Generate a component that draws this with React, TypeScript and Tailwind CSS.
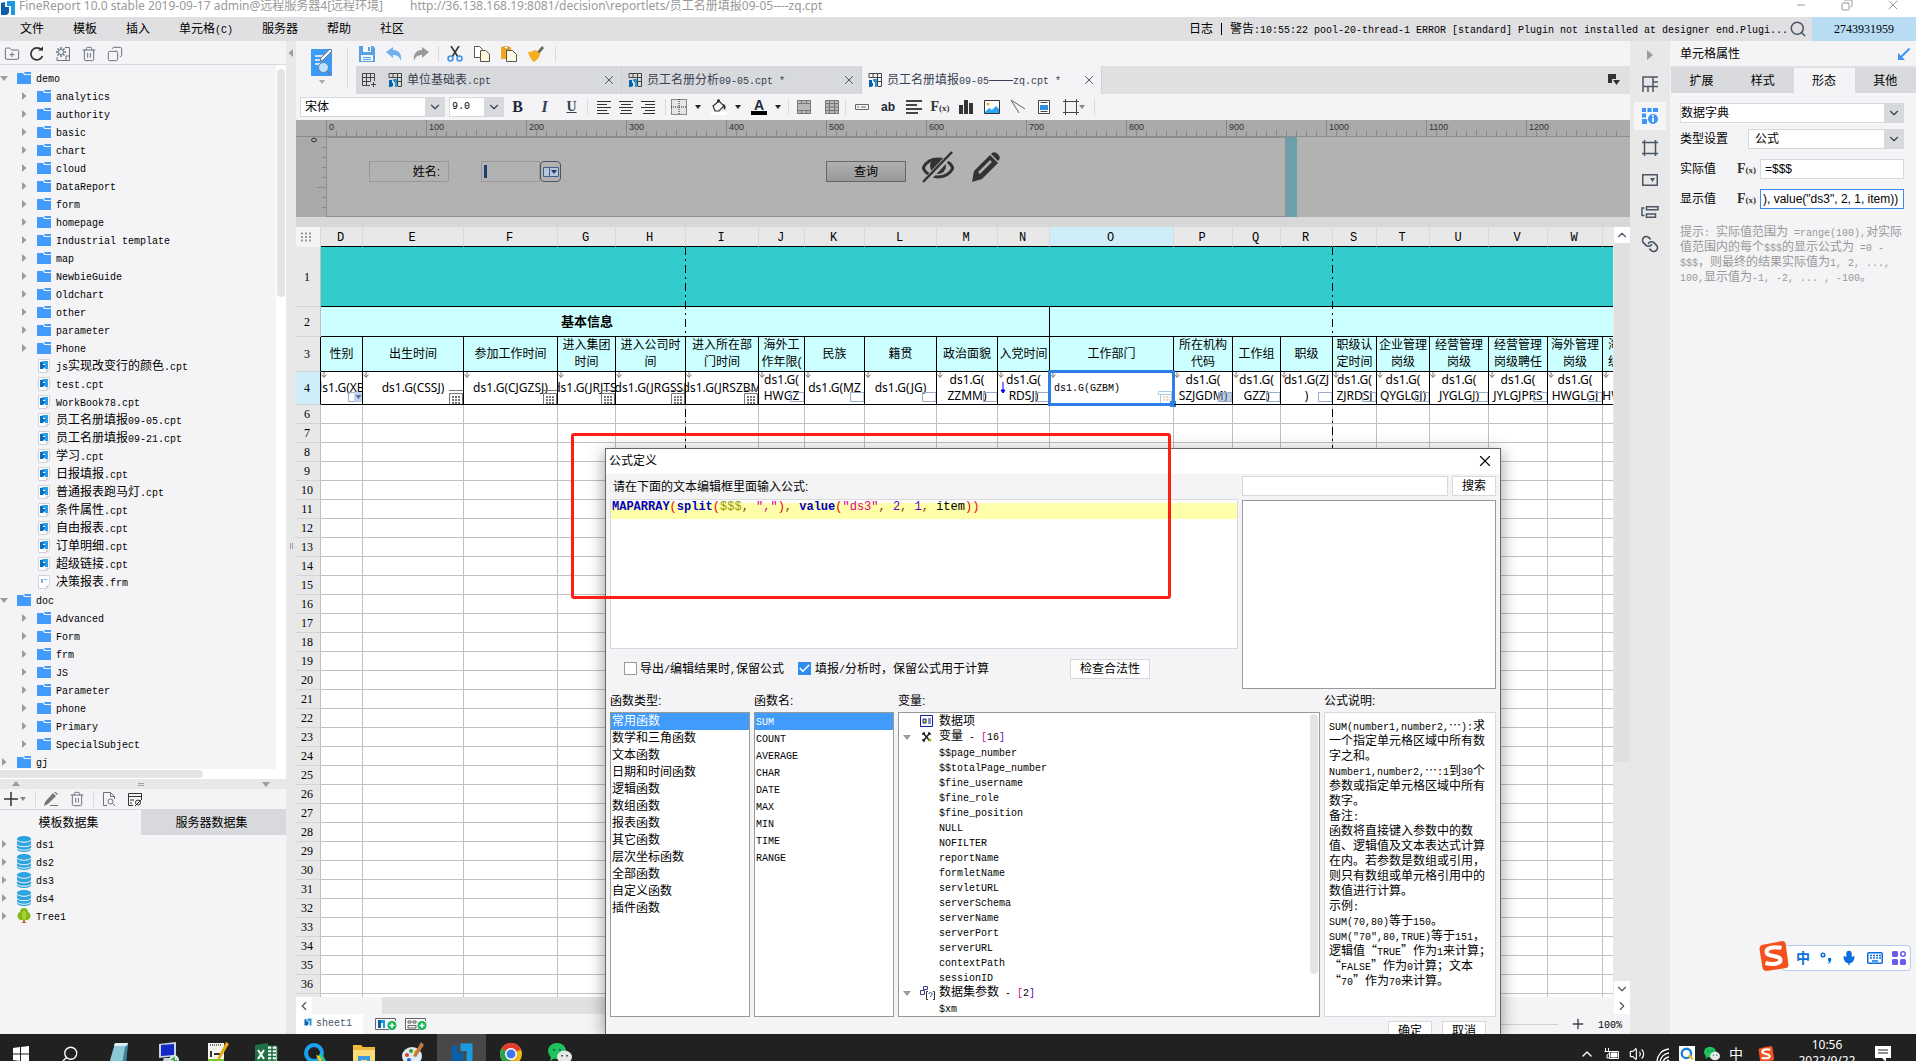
import { ReactNode } from "react";
import {
  Check,
  ChevronDown,
  ChevronLeft,
  ChevronRight,
  ChevronUp,
  Copy,
  FolderPlus,
  Link,
  Mic,
  Minus,
  Pencil,
  Plus,
  Search,
  Trash2,
  Volume2,
  X,
} from "lucide-react";

type TreeNode = { label: string; kind: "folder" | "cpt" | "frm"; level: 0 | 1; isOpen?: boolean };
type ColumnType = {
  id: string;
  width: number;
  title: string[];
  value: string[];
  widget: "combo" | "date" | "text" | "tree" | "none";
};

const folders = (names: string[]): TreeNode[] => names.map((label) => ({ label, kind: "folder", level: 1 }));

const templateTree: TreeNode[] = [
  { label: "demo", kind: "folder", level: 0, isOpen: true },
  ...folders([
    "analytics",
    "authority",
    "basic",
    "chart",
    "cloud",
    "DataReport",
    "form",
    "homepage",
    "Industrial template",
    "map",
    "NewbieGuide",
    "Oldchart",
    "other",
    "parameter",
    "Phone",
  ]),
  { label: "js实现改变行的颜色.cpt", kind: "cpt", level: 1 },
  { label: "test.cpt", kind: "cpt", level: 1 },
  { label: "WorkBook78.cpt", kind: "cpt", level: 1 },
  { label: "员工名册填报09-05.cpt", kind: "cpt", level: 1 },
  { label: "员工名册填报09-21.cpt", kind: "cpt", level: 1 },
  { label: "学习.cpt", kind: "cpt", level: 1 },
  { label: "日报填报.cpt", kind: "cpt", level: 1 },
  { label: "普通报表跑马灯.cpt", kind: "cpt", level: 1 },
  { label: "条件属性.cpt", kind: "cpt", level: 1 },
  { label: "自由报表.cpt", kind: "cpt", level: 1 },
  { label: "订单明细.cpt", kind: "cpt", level: 1 },
  { label: "超级链接.cpt", kind: "cpt", level: 1 },
  { label: "决策报表.frm", kind: "frm", level: 1 },
  { label: "doc", kind: "folder", level: 0, isOpen: true },
  ...folders(["Advanced", "Form", "frm", "JS", "Parameter", "phone", "Primary", "SpecialSubject"]),
  { label: "gj", kind: "folder", level: 0 },
];

const columns: ColumnType[] = [
  { id: "D", width: 42, title: ["性别"], value: ["ds1.G(XB)"], widget: "combo" },
  { id: "E", width: 101, title: ["出生时间"], value: ["ds1.G(CSSJ)"], widget: "date" },
  { id: "F", width: 94, title: ["参加工作时间"], value: ["ds1.G(CJGZSJ)"], widget: "date" },
  { id: "G", width: 58, title: ["进入集团", "时间"], value: ["ds1.G(JRJTSJ"], widget: "date" },
  { id: "H", width: 70, title: ["进入公司时", "间"], value: ["ds1.G(JRGSSJ"], widget: "date" },
  { id: "I", width: 73, title: ["进入所在部", "门时间"], value: ["ds1.G(JRSZBM"], widget: "date" },
  { id: "J", width: 46, title: ["海外工", "作年限("], value: ["ds1.G(", "HWGZ"], widget: "text" },
  { id: "K", width: 60, title: ["民族"], value: ["ds1.G(MZ"], widget: "text" },
  { id: "L", width: 72, title: ["籍贯"], value: ["ds1.G(JG)"], widget: "text" },
  { id: "M", width: 61, title: ["政治面貌"], value: ["ds1.G(", "ZZMM)"], widget: "text" },
  { id: "N", width: 52, title: ["入党时间"], value: ["ds1.G(", "RDSJ)"], widget: "text" },
  { id: "O", width: 124, title: ["工作部门"], value: ["ds1.G(GZBM)"], widget: "none" },
  { id: "P", width: 59, title: ["所在机构", "代码"], value: ["ds1.G(", "SZJGDM)"], widget: "tree" },
  { id: "Q", width: 48, title: ["工作组"], value: ["ds1.G(", "GZZ)"], widget: "text" },
  { id: "R", width: 52, title: ["职级"], value: ["ds1.G(ZJ", ")"], widget: "text" },
  { id: "S", width: 44, title: ["职级认", "定时间"], value: ["ds1.G(", "ZJRDSJ"], widget: "text" },
  { id: "T", width: 53, title: ["企业管理", "岗级"], value: ["ds1.G(", "QYGLGJ)"], widget: "text" },
  { id: "U", width: 59, title: ["经营管理", "岗级"], value: ["ds1.G(", "JYGLGJ)"], widget: "text" },
  { id: "V", width: 59, title: ["经营管理", "岗级聘任"], value: ["ds1.G(", "JYLGJPRS"], widget: "text" },
  { id: "W", width: 55, title: ["海外管理", "岗级"], value: ["ds1.G(", "HWGLGJ"], widget: "text" },
  { id: "X", width: 59, title: ["海外管理", "级别聘任"], value: ["ds1.G(", "HWGLJPRS"], widget: "text" },
];

const emptyRows = Array.from({ length: 32 }, (_, i) => i + 6);

const functionTypes = [
  "常用函数",
  "数学和三角函数",
  "文本函数",
  "日期和时间函数",
  "逻辑函数",
  "数组函数",
  "报表函数",
  "其它函数",
  "层次坐标函数",
  "全部函数",
  "自定义函数",
  "插件函数",
];
const functionNames = ["SUM", "COUNT", "AVERAGE", "CHAR", "DATE", "MAX", "MIN", "TIME", "RANGE"];
const variables = [
  "$$page_number",
  "$$totalPage_number",
  "$fine_username",
  "$fine_role",
  "$fine_position",
  "NULL",
  "NOFILTER",
  "reportName",
  "formletName",
  "servletURL",
  "serverSchema",
  "serverName",
  "serverPort",
  "serverURL",
  "contextPath",
  "sessionID",
];
const description = [
  "SUM(number1,number2,…):求",
  "一个指定单元格区域中所有数",
  "字之和。",
  "Number1,number2,…:1到30个",
  "参数或指定单元格区域中所有",
  "数字。",
  "备注:",
  "函数将直接键入参数中的数",
  "值、逻辑值及文本表达式计算",
  "在内。若参数是数组或引用，",
  "则只有数组或单元格引用中的",
  "数值进行计算。",
  "示例:",
  "SUM(70,80)等于150。",
  'SUM("70",80,TRUE)等于151，',
  "逻辑值“TRUE”作为1来计算；",
  "“FALSE”作为0计算；文本",
  "“70”作为70来计算。",
];
const hint = [
  "提示: 实际值范围为 =range(100),对实际",
  "值范围内的每个$$$的显示公式为 =0 -",
  "$$$，则最终的结果实际值为1, 2, ...,",
  "100,显示值为-1, -2, ... , -100。",
];

// Half-width characters take half of a full-width one, as in a Song face.
function Song({ children }: { children: string }) {
  return (
    <span className="whitespace-pre">
      {children.split(/([\x20-\x7e]+)/).map((part, i) =>
        i % 2 ? (
          <span key={i} className="font-['Liberation_Mono','Noto_Sans_CJK_SC',monospace] text-[10px]">
            {part}
          </span>
        ) : (
          part
        )
      )}
    </span>
  );
}

function FrMark({ className }: { className: string }) {
  return (
    <svg className={className} viewBox="0 0 16 16">
      <path d="M1 3l4-1v5h4v4a4 4 0 0 1-4 4H1z" fill="#0b5fa8" />
      <path d="M7 1h8v14h-4V6H7z" fill="#1d9be0" />
    </svg>
  );
}

function FolderIcon() {
  return (
    <svg className="h-3 w-3.5" viewBox="0 0 14 12">
      <path d="M0 1h6l1 2h7v9H0z" fill="#409bfa" />
      <path d="M7 0h7v2H8z" fill="#409bfa" />
    </svg>
  );
}

function FileIcon({ isForm }: { isForm?: boolean }) {
  return (
    <svg className="h-3.5 w-3.5" viewBox="0 0 14 14">
      <path d="M1.500.500h11v10l-3 3h-8z" fill="#fff" stroke="#cfd3d8" />
      {isForm ? (
        <path d="M4 4h2v4H4zM7 4h3v1H7z" fill="#7fb2e5" />
      ) : (
        <>
          <path d="M3 3l3-.5V6h2v2L6 10H3z" fill="#0b6fc0" />
          <path d="M6 2h5v8H8V5H6z" fill="#2a9fe5" />
        </>
      )}
      <path d="M9 13.500v-3h3.500z" fill="#cfd3d8" />
    </svg>
  );
}

function Triangle({ isOpen }: { isOpen?: boolean }) {
  return (
    <svg className="h-2 w-2" viewBox="0 0 8 8">
      <path d={isOpen ? "M0 2h8L4 7z" : "M2 0l4.500 4L2 8z"} fill="#9c9c9c" />
    </svg>
  );
}

function Caret({ color = "#222" }: { color?: string }) {
  return (
    <svg className="h-1 w-1.5" viewBox="0 0 6 4">
      <path d="M0 0h6L3 4z" fill={color} />
    </svg>
  );
}

function Divider({ className = "h-4" }: { className?: string }) {
  return <span className={`w-px shrink-0 bg-[#dadadc] ${className}`} />;
}

function IconButton({ label, className = "w-[27px]", children }: { label: string; className?: string; children: ReactNode }) {
  return (
    <button aria-label={label} className={`flex shrink-0 items-center justify-center ${className}`} type="button">
      {children}
    </button>
  );
}

function SelectBox({ label, options, className }: { label: string; options: string[]; className: string }) {
  return (
    <div className={`flex h-5 border border-[#d8d9dc] bg-white ${className}`}>
      <select aria-label={label} className="min-w-0 flex-1 appearance-none bg-white outline-none">
        {options.map((option) => (
          <option key={option}>{option}</option>
        ))}
      </select>
      <span className="flex w-[19px] items-center justify-center bg-[#d8d9dc]">
        <ChevronDown className="h-3.5 w-3.5 text-gray-700" />
      </span>
    </div>
  );
}

function Fx() {
  return (
    <span aria-hidden className="font-['Liberation_Serif',serif] text-sm font-bold text-[#333]">
      F<span className="text-[9px]">(x)</span>
    </span>
  );
}

function TitleBar() {
  return (
    <header className="flex h-[17px] shrink-0 items-start bg-white font-['Noto_Sans','Noto_Sans_CJK_SC',sans-serif] leading-3 text-[#999]">
      <FrMark className="h-4 w-4" />
      <span className="ml-[3px] w-[391px] shrink-0 whitespace-nowrap">
        FineReport 10.0 stable 2019-09-17 admin@远程服务器4[远程环境]
      </span>
      <span className="flex-1 whitespace-nowrap">
        http://36.138.168.19:8081/decision\reportlets/员工名册填报09-05----zq.cpt
      </span>
      <IconButton className="h-2.5 w-[46px]" label="最小化">
        <Minus className="h-3 w-3" />
      </IconButton>
      <IconButton className="h-2.5 w-[46px]" label="还原">
        <Copy className="h-3 w-3 -scale-x-100" />
      </IconButton>
      <IconButton className="h-2.5 w-[46px]" label="关闭">
        <X className="h-4 w-4" strokeWidth={1.5} />
      </IconButton>
    </header>
  );
}

function MenuBar() {
  return (
    <nav className="flex h-6 shrink-0 items-center bg-[#e0e0e3]">
      <div className="flex flex-1 gap-[29px] pl-5">
        {["文件", "模板", "插入", "单元格(C)", "服务器", "帮助", "社区"].map((item) => (
          <button key={item} className="whitespace-nowrap" type="button">
            <Song>{item}</Song>
          </button>
        ))}
      </div>
      <div className="flex items-center gap-2">
        <span>日志</span>
        <span className="h-3 w-px bg-black" />
        <Song>
          警告:10:55:22 pool-20-thread-1 ERROR [standard] Plugin not installed at designer end.Plugi...
        </Song>
      </div>
      <IconButton className="w-5" label="搜索">
        <Search className="h-[18px] w-[18px] text-gray-600" strokeWidth={2} />
      </IconButton>
      <button
        className="ml-1 h-full w-[104px] bg-[#b8dcf4] font-['Liberation_Serif',serif]"
        type="button">
        2743931959
      </button>
    </nav>
  );
}

function DatabaseIcon() {
  return (
    <svg className="h-4 w-3.5" viewBox="0 0 14 16">
      <path d="M0 3c0-4 14-4 14 0v10c0 4-14 4-14 0z" fill="#2ba4e0" />
      <path d="M0 4c2 3 12 3 14 0M0 8.500c2 3 12 3 14 0M0 12c2 3 12 3 14 0" fill="none" stroke="#f4f4f6" />
    </svg>
  );
}

function TreeIcon() {
  return (
    <svg className="h-4 w-3.5" viewBox="0 0 14 16">
      <path d="M7 0c3 0 4 2 4 4 3 1 4 7-1 8H4C-1 11 0 5 3 4c0-2 1-4 4-4z" fill="#84b816" />
      <path d="M6 3c-2 2-1 7 0 9h2c2-3 2-7 0-9z" fill="#a4d233" />
      <path d="M4 15l2-1v-2h2v2l2 1z" fill="#c56a1c" />
    </svg>
  );
}

function Sidebar() {
  return (
    <aside className="flex w-[286px] shrink-0 flex-col bg-[#f4f4f6]">
      <div className="flex h-6 shrink-0 items-center border-b border-[#d8d9dc] pt-0.5 text-gray-500">
        <IconButton className="w-6" label="新建文件夹">
          <FolderPlus className="h-4 w-4" strokeWidth={1.5} />
        </IconButton>
        <IconButton className="w-[26px]" label="刷新">
          <svg className="h-4 w-4" viewBox="0 0 16 16">
            <path d="M12.500 4A6 6 0 1 0 13.500 10" fill="none" stroke="#333" strokeWidth="1.700" />
            <path d="M9 4.500h5v-4z" fill="#333" />
          </svg>
        </IconButton>
        <IconButton className="w-[26px]" label="设置">
          <svg className="h-4 w-4" fill="none" stroke="currentColor" viewBox="0 0 16 16">
            <path d="M10 1.500h4.500v13H2V11M14 10h-3v4" />
            <circle cx="6" cy="6" r="2.500" />
            <path d="M6 1v2M6 9v2M1 6h2M9 6h2M2.500 2.500L4 4M8 8l1.500 1.500M2.500 9.500L4 8M8 4l1.500-1.500" strokeWidth="1.500" />
          </svg>
        </IconButton>
        <IconButton className="w-[26px]" label="删除">
          <Trash2 className="h-4 w-4" strokeWidth={1.5} />
        </IconButton>
        <IconButton className="w-[26px]" label="复制">
          <Copy className="h-4 w-4 -scale-x-100" strokeWidth={1.5} />
        </IconButton>
      </div>
      <div className="flex min-h-0 flex-1">
        <ul className="min-w-0 flex-1 overflow-hidden pt-1">
          {templateTree.map((node) => (
            <li key={node.label} className={`flex h-[18px] items-center ${node.level ? "pl-5" : ""}`}>
              <span className="w-[17px] shrink-0">{node.kind === "folder" && <Triangle isOpen={node.isOpen} />}</span>
              {node.kind === "folder" ? <FolderIcon /> : <FileIcon isForm={node.kind === "frm"} />}
              <span className="ml-[5px]">
                <Song>{node.label}</Song>
              </span>
            </li>
          ))}
        </ul>
        <div className="w-2.5 bg-white pt-1">
          <div className="mx-px h-[228px] rounded-full bg-[#e4e4e4]" />
        </div>
      </div>
      <div className="h-2.5 shrink-0 bg-white pt-px">
        <div className="h-2 w-[203px] rounded-r-full bg-[#e4e4e4]" />
      </div>
      <div className="flex h-2.5 shrink-0 items-center justify-between bg-[#e8e8e8] pr-4 pl-3">
        <span className="rotate-180">
          <Triangle isOpen />
        </span>
        <span className="h-[3px] w-1.5 border-y border-gray-400" />
        <Triangle isOpen />
      </div>
      <div className="flex h-[21px] shrink-0 items-center border-b border-[#d8d9dc] text-gray-500">
        <IconButton className="w-[30px] gap-0.5" label="添加数据集">
          <svg className="h-3.5 w-3.5" viewBox="0 0 14 14">
            <path d="M7 0v14M0 7h14" stroke="#333" strokeWidth="1.500" />
          </svg>
          <Caret color="#888" />
        </IconButton>
        <span className="w-[5px]" />
        <Divider />
        <IconButton className="w-[29px]" label="编辑">
          <svg className="h-3.5 w-3.5" viewBox="0 0 14 14">
            <path d="M0 14l1-4 8-9 3 3-8 8z" fill="#777" />
            <path d="M10 0l1-.5L14 2l-1 1z" fill="#777" />
            <path d="M6 13.500h8" stroke="#777" />
          </svg>
        </IconButton>
        <IconButton className="w-6" label="删除">
          <Trash2 className="h-4 w-4" strokeWidth={1.5} />
        </IconButton>
        <span className="w-1" />
        <Divider />
        <IconButton className="w-[30px]" label="预览">
          <svg className="h-4 w-4" fill="none" stroke="currentColor" viewBox="0 0 16 16">
            <path d="M6 14.500H2.500v-13h7l4 4V8M9.500 1.500v4h4" />
            <circle cx="9.500" cy="10.500" r="2.500" />
            <path d="M11.500 12.500l2.500 2.500" />
          </svg>
        </IconButton>
        <IconButton className="w-[22px]" label="数据连接">
          <svg className="h-4 w-4" fill="none" stroke="#333" viewBox="0 0 16 16">
            <path d="M6 14.500H1.500v-12h13V8M1.500 5.500h13M3 9h4M3 12h2" />
            <circle cx="11" cy="11.500" r="2.500" />
            <path d="M8 15l7-7" />
          </svg>
        </IconButton>
      </div>
      <div className="flex h-[25px] shrink-0" role="tablist">
        <button aria-selected className="w-[141px] pr-1" role="tab" type="button">
          模板数据集
        </button>
        <button aria-selected={false} className="flex-1 bg-[#d8d9dc] pr-1" role="tab" type="button">
          服务器数据集
        </button>
      </div>
      <ul className="h-[199px] shrink-0">
        {["ds1", "ds2", "ds3", "ds4", "Tree1"].map((name) => (
          <li key={name} className="flex h-[18px] items-center">
            <span className="w-[17px]">
              <Triangle />
            </span>
            {name === "Tree1" ? <TreeIcon /> : <DatabaseIcon />}
            <span className="ml-[5px]">
              <Song>{name}</Song>
            </span>
          </li>
        ))}
      </ul>
    </aside>
  );
}

function SheetIcon() {
  return (
    <svg className="h-3.5 w-3.5" viewBox="0 0 14 14">
      <path d="M1 4.500V.500h12.500v13H10M1 4.500h12.500M5 .500v4M9.500.500v13M6 8.500h7.500" fill="none" stroke="#444" />
      <path d="M1 7h3v3h1v3l-2 1H1z" fill="#0b5fa8" />
      <path d="M5 6h4v8H7V8H5z" fill="#1d9be0" />
    </svg>
  );
}

function EditorToolbar() {
  return (
    <div className="flex h-[53px] shrink-0">
      <div className="flex w-[51px] shrink-0 flex-col items-center pt-[7px]">
        <svg className="h-7 w-[22px]" viewBox="0 0 22 28">
          <rect fill="#3c9bf7" height="27" rx="1" width="21" y="1" />
          <path d="M4 8h8M4 12h6M4 16h5" stroke="#fff" strokeWidth="1.500" />
          <path d="M9 13l1-3 9-9 2 2-9 9z" fill="#fff" stroke="#777" />
          <circle cx="12.500" cy="19.500" fill="#bfe0fb" r="5" stroke="#5a84ad" />
          <path d="M16 23l4 4" stroke="#5a84ad" strokeWidth="2" />
        </svg>
        <span className="mt-1">
          <Caret color="#aaa" />
        </span>
      </div>
      <Divider className="mt-1.5 h-[41px]" />
      <div className="flex min-w-0 flex-1 flex-col pl-2">
        <div className="flex h-[25px] shrink-0 items-center">
          <IconButton className="w-[22px]" label="保存">
            <svg className="h-4 w-4" viewBox="0 0 16 16">
              <path d="M0 0h14l2 2v14H0z" fill="#5a9fe0" />
              <path d="M4 0h8v6H4zM2 9h12v6H2z" fill="#f4f9ff" />
              <path d="M9 1h2v4H9zM4 11h8v1H4zM4 13h8v1H4z" fill="#5a9fe0" />
            </svg>
          </IconButton>
          <IconButton className="w-8" label="撤销">
            <svg className="h-4 w-4" viewBox="0 0 16 16">
              <path d="M0 6l7-5v3c6 0 9 4 8 11-1-4-4-6-8-6v3z" fill="#6fb0ee" />
            </svg>
          </IconButton>
          <IconButton className="w-[22px]" label="重做">
            <svg className="h-4 w-4 -scale-x-100" viewBox="0 0 16 16">
              <path d="M0 6l7-5v3c6 0 9 4 8 11-1-4-4-6-8-6v3z" fill="#999" />
            </svg>
          </IconButton>
          <span className="w-1.5" />
          <Divider />
          <IconButton className="w-8" label="剪切">
            <svg className="h-4 w-4" fill="none" viewBox="0 0 16 16">
              <path d="M4 0l7 11M12 0L5 11" stroke="#333" strokeWidth="1.600" />
              <circle cx="3.500" cy="12.500" r="2.500" stroke="#3c8fe6" strokeWidth="1.500" />
              <circle cx="12.500" cy="12.500" r="2.500" stroke="#3c8fe6" strokeWidth="1.500" />
            </svg>
          </IconButton>
          <IconButton className="w-[22px]" label="复制">
            <svg className="h-4 w-4" fill="#fff" stroke="#555" viewBox="0 0 16 16">
              <path d="M.500.500h5l3 3v8h-8z" />
              <path d="M6.500 4.500h5l4 3.500v7.500h-9z" fill="#fff6dc" />
            </svg>
          </IconButton>
          <IconButton className="w-8" label="粘贴">
            <svg className="h-4 w-4" viewBox="0 0 16 16">
              <path d="M0 1h10v12H0z" fill="#f0a81c" />
              <path d="M3 0h4v3H3z" fill="#fff" stroke="#b87a08" />
              <path d="M5.500 4.500h6l4 4v7h-10z" fill="#fff8e2" stroke="#555" />
            </svg>
          </IconButton>
          <IconButton className="w-[22px]" label="格式刷">
            <svg className="h-4 w-4" viewBox="0 0 16 16">
              <path d="M9 6l5-6 2 2-5 6z" fill="#666" />
              <path d="M0 6c4 0 6-2 8-2l4 4c0 3-3 6-6 8-3-2-5-6-6-10z" fill="#f5ae20" />
            </svg>
          </IconButton>
          <span className="w-2" />
          <Divider />
        </div>
        <div className="flex h-7 items-stretch bg-[#e0e0e3] text-gray-700">
          <IconButton className="w-[26px] bg-[#d8d9dc]" label="新建模板">
            <svg className="h-3.5 w-3.5" viewBox="0 0 14 14">
              <path d="M8 12.500H.500V.500h12V8M.500 4.500h12M.500 8.500h8M4.500.500v12M8.500.500v8M9 11.500h5M11.500 9v5" fill="none" stroke="#444" />
            </svg>
          </IconButton>
          {["单位基础表.cpt", "员工名册分析09-05.cpt *", "员工名册填报09-05——zq.cpt *"].map((name, i) => (
            <div
              key={name}
              className={`flex w-60 items-center border-r border-[#d0d1d4] pr-[5px] pl-1.5 ${
                i === 2 ? "bg-[#f4f4f6]" : "bg-[#d8d9dc]"
              }`}>
              <SheetIcon />
              <span className="ml-[5px] flex-1">
                <Song>{name}</Song>
              </span>
              <button aria-label="关闭标签" type="button">
                <X className="h-3.5 w-3.5" strokeWidth={1.5} />
              </button>
            </div>
          ))}
          <span className="flex-1" />
          <IconButton className="w-8" label="全部标签">
            <svg className="h-3 w-3" viewBox="0 0 12 12">
              <path d="M0 0h8v5H4v4H0z" fill="#333" />
              <path d="M5 6h7l-3.500 5z" fill="#333" />
            </svg>
          </IconButton>
        </div>
      </div>
    </div>
  );
}

function Lines({ d }: { d: string }) {
  return (
    <svg className="h-3.5 w-4" viewBox="0 0 16 14">
      <path d={d} stroke="#333" strokeWidth="1.200" />
    </svg>
  );
}

function FormatBar() {
  return (
    <div className="flex h-[26px] shrink-0 items-center pl-1">
      <SelectBox className="w-[145px] pl-1" label="字体" options={["宋体"]} />
      <SelectBox className="ml-1 w-[55px] pl-0.5 font-['Liberation_Mono',monospace] text-[10px]" label="字号" options={["9.0"]} />
      <IconButton label="加粗">
        <span className="font-['Liberation_Serif',serif] text-base font-bold text-gray-800">B</span>
      </IconButton>
      <IconButton label="斜体">
        <span className="font-['Liberation_Serif',serif] text-base font-bold text-gray-700 italic">I</span>
      </IconButton>
      <IconButton label="下划线">
        <span className="font-['Liberation_Serif',serif] text-sm font-bold text-gray-700 underline">U</span>
      </IconButton>
      <span className="w-0.5" />
      <Divider />
      <span className="w-[5px]" />
      <IconButton className="w-[22px]" label="左对齐">
        <Lines d="M1 1.500h14M1 4.500h10M1 7.500h14M1 10.500h10M1 13.500h12" />
      </IconButton>
      <IconButton className="w-[22px]" label="居中">
        <Lines d="M1 1.500h14M3 4.500h10M1 7.500h14M3 10.500h10M2 13.500h12" />
      </IconButton>
      <IconButton className="w-[22px]" label="右对齐">
        <Lines d="M1 1.500h14M5 4.500h10M1 7.500h14M5 10.500h10M3 13.500h12" />
      </IconButton>
      <span className="w-1.5" />
      <Divider />
      <IconButton className="w-10 gap-2" label="边框">
        <svg className="h-4 w-4" viewBox="0 0 16 16">
          <path d="M.500.500h15v15H.500zM8 0v16M0 8h16" fill="#e6e6e6" stroke="#222" strokeDasharray="1 1" />
        </svg>
        <Caret />
      </IconButton>
      <IconButton className="w-10 gap-2" label="填充颜色">
        <svg className="h-4 w-4" viewBox="0 0 16 16">
          <path d="M2 7l6-5 5 5-5 5H4z" fill="none" stroke="#333" strokeWidth="1.200" />
          <path d="M6 4V1a2 2 0 0 1 3 0v2M12 5c3 1 3 3 2 6-1-1-2-2-2-6z" fill="#333" />
          <path d="M0 13h16v3H0z" fill="#fff" />
        </svg>
        <Caret />
      </IconButton>
      <IconButton className="w-10 gap-2" label="字体颜色">
        <span className="flex w-4 flex-col items-center border-b-4 border-black font-['Liberation_Sans',sans-serif] text-sm leading-3 font-bold text-gray-800">
          A
        </span>
        <Caret />
      </IconButton>
      <span className="w-0.5" />
      <Divider />
      <IconButton className="w-[30px]" label="合并单元格">
        <svg className="h-3.5 w-3.5" fill="#b8b8b8" stroke="#777" viewBox="0 0 14 14">
          <path d="M.500.500h13v13H.500zM0 3.500h14M0 10.500h14M4.500.500v3M9.500.500v3M4.500 10.500v3M9.500 10.500v3" />
        </svg>
      </IconButton>
      <IconButton className="w-[26px]" label="取消合并">
        <svg className="h-3.5 w-3.5" fill="#b8b8b8" stroke="#777" viewBox="0 0 14 14">
          <path d="M.500.500h13v13H.500zM0 3.500h14M0 7h14M0 10.500h14M4.500.500v13M9.500.500v13" />
        </svg>
      </IconButton>
      <Divider />
      <IconButton className="w-8" label="单元格元素">
        <svg className="h-1.5 w-3.5" fill="none" stroke="#666" viewBox="0 0 14 6">
          <path d="M.500.500h13v5H.500zM3 2v2M6 3h5" />
        </svg>
      </IconButton>
      <IconButton className="w-5" label="文本">
        <span className="font-['Liberation_Sans',sans-serif] text-xs font-bold text-gray-800">ab</span>
      </IconButton>
      <IconButton className="w-8" label="富文本">
        <svg className="h-3.5 w-4" viewBox="0 0 16 14">
          <path d="M0 1h16M0 5h11M0 9h16M0 13h12" stroke="#444" strokeWidth="2" />
        </svg>
      </IconButton>
      <IconButton className="w-5" label="公式">
        <Fx />
      </IconButton>
      <IconButton className="w-8" label="图表">
        <svg className="h-3.5 w-3.5" viewBox="0 0 14 14">
          <path d="M0 5h4v9H0zM5 0h4v14H5zM10 3h4v11h-4z" fill="#333" />
        </svg>
      </IconButton>
      <IconButton className="w-5" label="图片">
        <svg className="h-3.5 w-4" viewBox="0 0 16 14">
          <path d="M.500.500h15v13H.500z" fill="#fff" stroke="#333" />
          <circle cx="4" cy="4" fill="#f5a623" r="1.500" />
          <path d="M1 12l4-4 3 2 4-4 3 3v4H1z" fill="#29a4ee" />
        </svg>
      </IconButton>
      <IconButton className="w-8" label="斜线">
        <svg className="h-3.5 w-4" fill="none" stroke="#666" viewBox="0 0 16 14">
          <path d="M1 0l14 9M1 0l8 13" />
        </svg>
      </IconButton>
      <IconButton className="w-5" label="子报表">
        <svg className="h-3.5 w-3" viewBox="0 0 12 14">
          <path d="M.500.500h11v13H.500z" fill="#fff" stroke="#444" />
          <path d="M2.500 2.500h7M2.500 11.500h7" stroke="#444" />
          <path d="M2 5h8v5H2z" fill="#2a8fe0" />
        </svg>
      </IconButton>
      <IconButton className="w-10" label="悬浮元素">
        <svg className="h-4 w-4" fill="none" stroke="#444" viewBox="0 0 16 16">
          <path d="M2.500 0v16M13.500 0v16M0 2.500h16M0 13.500h16" />
        </svg>
        <Caret color="#888" />
      </IconButton>
      <Divider />
    </div>
  );
}

function ParameterPane() {
  return (
    <section className="shrink-0 bg-[#aaa] text-[#333]">
      <div className="flex h-[17px] overflow-hidden border-b border-[#8c8c8c] pl-[30px]">
        {Array.from({ length: 13 }, (_, i) => (
          <div key={i} className="flex h-4 w-[100px] shrink-0 flex-col border-l border-[#888]">
            <span className="h-2.5 pl-0.5 font-['Liberation_Sans',sans-serif] text-[9px] leading-[14px]">{i * 100}</span>
            <svg className="h-1.5 w-[99px]" viewBox="0 0 99 6">
              <path
                d="M9.500 1v5M19.500 1v5M29.500 1v5M39.500 1v5M49.500-6v12M59.500 1v5M69.500 1v5M79.500 1v5M89.500 1v5"
                overflow="visible"
                stroke="#888"
              />
            </svg>
          </div>
        ))}
      </div>
      <div className="flex h-20">
        <div className="flex w-[30px] shrink-0 items-start justify-end">
          <svg className="h-20 w-4" viewBox="0 0 16 80">
            <ellipse cx="4" cy="3" fill="none" rx="2.500" ry="1.800" stroke="#333" />
            <path d="M12 10.500h4M12 20.500h4M12 30.500h4M12 40.500h4M7 50.500h9M12 60.500h4M12 70.500h4" stroke="#888" />
          </svg>
        </div>
        <div className="flex w-[960px] items-start border border-[#8f8f8f] bg-[#b2b2b2] pt-[23px] text-black">
          <label className="ml-[42px] flex h-[21px] w-20 items-center justify-end border border-[#999] pr-2" htmlFor="name">
            姓名:
          </label>
          <div className="ml-8 flex h-[21px] w-20">
            <div className="flex min-w-0 flex-1 border border-[#999] pl-0.5">
              <span className="my-[3px] w-[3px] bg-[#1d3f6e]" />
              <input className="min-w-0 flex-1 bg-transparent" id="name" />
            </div>
            <IconButton className="w-[21px] rounded-sm border border-gray-600" label="展开">
              <svg className="h-2.5 w-4" viewBox="0 0 16 10">
                <path d="M.500.500h15v9H.500zM6.500 0v10" fill="#b9c6da" stroke="#44608c" />
                <path d="M8 3h6l-3 4z" fill="#1f3d73" />
              </svg>
            </IconButton>
          </div>
          <button
            className="ml-[265px] h-[21px] w-20 border border-[#666] bg-linear-to-b from-[#b0b0b0] to-[#999]"
            type="button">
            查询
          </button>
          <div className="-mt-2.5 ml-4 flex gap-4">
            <svg className="h-8 w-8" fill="none" viewBox="0 0 32 32">
              <path d="M1 17C7 5 25 5 31 17 25 29 7 29 1 17z" stroke="#333" strokeWidth="3" />
              <circle cx="16" cy="15" fill="#333" r="8" />
              <path d="M2 32L31 1" stroke="#b2b2b2" strokeWidth="6" />
              <path d="M1 31L30 1" stroke="#333" strokeWidth="2.500" />
            </svg>
            <svg className="h-8 w-8" viewBox="0 0 32 32">
              <path d="M2 31l2-11L20 4l8 8L12 28z" fill="#333" />
              <path d="M22 2c3-3 10 3 7 7l-1 1-7-7z" fill="#333" />
              <path d="M9 22L21 10" stroke="#b2b2b2" strokeWidth="2.500" />
            </svg>
          </div>
        </div>
        <div className="w-[11px] bg-[#6d9fab]" />
        <div className="flex-1 bg-[#b2b2b2]" />
      </div>
    </section>
  );
}

function WidgetBadge({ widget }: { widget: ColumnType["widget"] }) {
  if (widget === "none") return null;
  if (widget === "date")
    return (
      <svg className="absolute right-0 bottom-0 h-3.5 w-3.5" viewBox="0 0 14 14">
        <path d="M0 .500h14M.500 3.500h13V14M.500 3.500V14" fill="none" stroke="#777" />
        <path d="M3 7h9M3 10h9M3 13h9" stroke="#777" strokeDasharray="2 1" strokeWidth="2" />
      </svg>
    );
  return (
    <svg className="absolute right-0 bottom-0.5 h-2.5 w-3.5" viewBox="0 0 14 10">
      <path
        d="M.500.500H14v9H.500z"
        fill={widget === "tree" ? "#7f9dc4" : "none"}
        fillOpacity="0.5"
        stroke="#9aacc8"
      />
      {widget === "combo" && (
        <>
          <path d="M6 0h8v10H6z" fill="#c4d3ec" />
          <path d="M7.500 3h6l-3 4z" fill="#5670a8" />
        </>
      )}
    </svg>
  );
}

function DownMark() {
  return (
    <svg className="absolute top-0 left-0 h-1.5 w-1.5" viewBox="0 0 6 6">
      <path d="M3 0v5M.500 2.500L3 5.500l2.500-3" fill="none" stroke="#777" />
    </svg>
  );
}

function RowHead({ label, isActive, hasDark }: { label: string; isActive?: boolean; hasDark?: boolean }) {
  return (
    <th
      className={`border-r border-b border-b-[#d4d4d6] p-0 pr-0.5 font-['Liberation_Serif',serif] font-normal ${
        hasDark ? "border-r-black" : "border-r-[#c0c0c0]"
      } ${isActive ? "bg-[#d0eefa]" : "bg-[#e8e8e8]"}`}
      scope="row">
      {label}
    </th>
  );
}

function Grid() {
  return (
    <div className="relative min-w-0 flex-1 overflow-hidden bg-white">
      <table className="w-[1350px] table-fixed border-separate border-spacing-0">
        <colgroup>
          <col className="w-[25px]" />
          {columns.map((column) => (
            <col key={column.id} style={{ width: column.width }} />
          ))}
        </colgroup>
        <thead>
          <tr className="h-5">
            <th aria-label="全选" className="border-r border-[#d8d9dc] bg-[#f4f4f6] p-0">
              <svg className="mx-1 h-2.5 w-3" viewBox="0 0 12 10">
                <path d="M1 1.500h11M1 5h11M1 8.500h11" stroke="#999" strokeDasharray="2 2" strokeWidth="2" />
              </svg>
            </th>
            {columns.map((column) => (
              <th
                key={column.id}
                className={`border-r border-b border-r-[#d8d9dc] border-b-black p-0 pt-0.5 pr-0.5 font-['Liberation_Mono',monospace] leading-4 font-normal ${
                  column.id === "O" ? "bg-[#d0eefa]" : "bg-[#e8e8e8]"
                }`}
                scope="col">
                {column.id}
              </th>
            ))}
          </tr>
        </thead>
        <tbody>
          <tr className="h-[60px]">
            <RowHead label="1" />
            <td className="border-b border-black bg-[#33cccc]" colSpan={21} />
          </tr>
          <tr className="h-[30px]">
            <RowHead label="2" />
            <td
              className="border-r border-b border-black bg-[#ccffff] p-0 pr-[196px] text-center text-[13px] leading-4 font-bold"
              colSpan={11}>
              基本信息
            </td>
            <td className="border-b border-black bg-[#ccffff]" colSpan={10} />
          </tr>
          <tr className="h-[35px]">
            <RowHead hasDark label="3" />
            {columns.map((column) => (
              <td
                key={column.id}
                className="overflow-hidden border-r border-b border-black bg-[#ccffff] p-0 text-center leading-[17px] whitespace-nowrap">
                {column.title.map((line) => (
                  <div key={line} className="flex justify-center">
                    {line}
                  </div>
                ))}
              </td>
            ))}
          </tr>
          <tr className="h-[33px]">
            <RowHead hasDark isActive label="4" />
            {columns.map((column) => (
              <td
                key={column.id}
                className="relative border-r border-b border-black p-0 font-['Noto_Sans',sans-serif] leading-4 whitespace-nowrap">
                <div className="flex h-8 flex-col justify-center overflow-hidden">
                  {column.id === "O" ? (
                    <span className="pl-1">
                      <Song>ds1.G(GZBM)</Song>
                    </span>
                  ) : (
                    column.value.map((line) => (
                      <div key={line} className="flex justify-center">
                        {line}
                      </div>
                    ))
                  )}
                </div>
                <DownMark />
                <WidgetBadge widget={column.widget} />
                {column.id === "O" && (
                  <div className="absolute -inset-x-0.5 -top-0.5 -bottom-0.5 border-[3px] border-[#2f7fe8]">
                    <svg className="absolute right-0 bottom-0 h-3 w-3.5" viewBox="0 0 14 12">
                      <path d="M.500.500h13v3H.500zM2.500 3.500V12M13.500 3.500V12" fill="none" stroke="#a9cce4" />
                      <path d="M5 6h7M5 9h7" stroke="#e8c9a4" strokeDasharray="2 1" strokeWidth="1.500" />
                    </svg>
                    <span className="absolute -right-1 -bottom-1 h-1.5 w-1.5 bg-[#2f7fe8]" />
                  </div>
                )}
                {column.id === "N" && (
                  <svg className="absolute top-2.5 left-0.5 h-3 w-1.5" viewBox="0 0 6 12">
                    <path d="M3 0v10M1 8l2 3 2-3z" fill="#00f" stroke="#00f" />
                  </svg>
                )}
              </td>
            ))}
          </tr>
          {emptyRows.map((row) => (
            <tr key={row} className="h-[19px] leading-4">
              <RowHead label={String(row)} />
              {columns.map((column) => (
                <td key={column.id} className="border-r border-b border-[#c0c0c0] p-0" />
              ))}
            </tr>
          ))}
        </tbody>
      </table>
      {/* page breaks */}
      <div className="absolute top-5 bottom-0 left-[389px] w-px bg-[repeating-linear-gradient(#000_0_8px,transparent_8px_12px,#000_12px_14px,transparent_14px_18px)]" />
      <div className="absolute top-5 bottom-0 left-[1036px] w-px bg-[repeating-linear-gradient(#000_0_8px,transparent_8px_12px,#000_12px_14px,transparent_14px_18px)]" />
    </div>
  );
}

function SheetBar() {
  return (
    <div className="flex h-5 shrink-0 items-center">
      <button className="flex h-full w-[67px] items-center gap-1 bg-white pb-1 pl-2 text-gray-600" type="button">
        <FrMark className="h-2.5 w-2" />
        <Song>sheet1</Song>
      </button>
      <IconButton className="ml-3 w-[22px]" label="新增报表">
        <svg className="h-3 w-[22px]" viewBox="0 0 22 12">
          <path d="M15 .500H.500v11H14M15 .500h5.500V3" fill="none" stroke="#666" />
          <path d="M3 2h3v8H3z" fill="#0b5fa8" />
          <path d="M6 2h4v8H8V5H6z" fill="#1d9be0" />
          <circle cx="17" cy="7.500" fill="#18b456" r="4.500" />
          <path d="M17 5v5M14.500 7.500h5" stroke="#fff" strokeWidth="1.500" />
        </svg>
      </IconButton>
      <IconButton className="ml-2 w-[22px]" label="新增聚合报表">
        <svg className="h-3 w-[22px]" viewBox="0 0 22 12">
          <path d="M15 .500H.500v11H14M15 .500h5.500V3M3 3h3v2H3zM8 3h3v2H8zM3 7.500h8V10H3z" fill="none" stroke="#666" />
          <circle cx="17" cy="7.500" fill="#18b456" r="4.500" />
          <path d="M17 5v5M14.500 7.500h5" stroke="#fff" strokeWidth="1.500" />
        </svg>
      </IconButton>
      <span className="flex-1" />
      <span className="h-px w-[200px] bg-[#d0d0d0]" />
      <IconButton className="w-10" label="放大">
        <Plus className="h-4 w-4 text-gray-700" strokeWidth={2} />
      </IconButton>
      <span className="pr-2">
        <Song>100%</Song>
      </span>
    </div>
  );
}

function ListBox({ label, items }: { label: string; items: string[] }) {
  return (
    <ul aria-label={label} className="w-[140px] border border-[#999] bg-white" role="listbox">
      {items.map((item, i) => (
        <li
          key={item}
          aria-selected={i === 0}
          className={`h-[17px] pl-px leading-[17px] ${i === 0 ? "bg-[#409bfa] text-white" : ""}`}
          role="option">
          <Song>{item}</Song>
        </li>
      ))}
    </ul>
  );
}

function FormulaText() {
  return (
    <code className="block font-['Liberation_Mono',monospace] text-xs leading-2 whitespace-pre text-[#804000]">
      <b className="text-[#00c]">MAPARRAY</b>
      <span className="text-red-600">(</span>
      <b className="text-[#00c]">split</b>
      <span className="text-red-600">(</span>
      <span className="text-[#990]">$$$</span>, <span className="text-[#dc009c]">","</span>
      <span className="text-red-600">)</span>, <b className="text-[#00c]">value</b>
      <span className="text-red-600">(</span>
      <span className="text-[#dc009c]">"ds3"</span>, <span className="text-[#6400c8]">2</span>,{" "}
      <span className="text-[#6400c8]">1</span>, <span className="text-black">item</span>
      <span className="text-red-600">))</span>
    </code>
  );
}

function FormulaDialog() {
  return (
    <div
      aria-label="公式定义"
      className="absolute top-[407px] bottom-0 left-[309px] w-[896px] overflow-hidden border border-b-0 border-[#666] bg-[#f4f4f6] shadow-[0_4px_16px_rgba(0,0,0,0.4)]"
      role="dialog">
      <div className="flex h-[25px] items-center justify-between bg-white pb-0.5 pl-[3px]">
        <span>公式定义</span>
        <IconButton className="w-[30px]" label="关闭">
          <X className="h-[18px] w-[18px]" strokeWidth={1.5} />
        </IconButton>
      </div>
      <div className="flex gap-1 px-1">
        <div className="flex-1">
          <div className="flex h-[25px] items-center pl-[3px]">请在下面的文本编辑框里面输入公式:</div>
          <div
            aria-label="公式"
            className="h-[150px] border border-[#d8d9dc] bg-white pt-[3px]"
            contentEditable
            role="textbox"
            suppressContentEditableWarning>
            <div className="h-4 bg-[#ffffaa] pl-px">
              <FormulaText />
            </div>
          </div>
          <div className="flex h-10 items-center">
            <label className="ml-3.5 flex items-center gap-[3px]">
              <input className="h-[13px] w-[13px] appearance-none border border-[#999] bg-white" type="checkbox" />
              <Song>导出/编辑结果时,保留公式</Song>
            </label>
            <label className="ml-[14px] flex items-center gap-1">
              <span className="grid">
                <input
                  className="col-start-1 row-start-1 h-[13px] w-[13px] appearance-none bg-[#2f8df0]"
                  defaultChecked
                  type="checkbox"
                />
                <Check className="pointer-events-none col-start-1 row-start-1 h-[13px] w-[13px] text-white" strokeWidth={3} />
              </span>
              <Song>填报/分析时，保留公式用于计算</Song>
            </label>
            <span className="flex-1" />
            <button className="mr-[88px] h-5 w-20 border border-[#d8d9dc] bg-white" type="button">
              检查合法性
            </button>
          </div>
        </div>
        <div className="w-[254px] pt-0.5">
          <div className="flex h-5 gap-1">
            <input aria-label="搜索函数" className="min-w-0 flex-1 border border-[#d8d9dc] bg-white" />
            <button className="w-11 border border-[#d8d9dc] bg-white" type="button">
              搜索
            </button>
          </div>
          <div className="mt-1 h-[189px] border border-[#999] bg-white" />
        </div>
      </div>
      <div className="flex h-[23px] items-center gap-1 pl-1">
        <span className="w-[140px]">函数类型:</span>
        <span className="w-[140px]">函数名:</span>
        <span className="w-[422px]">变量:</span>
        <span>公式说明:</span>
      </div>
      <div className="flex h-[305px] gap-1 px-1">
        <ListBox items={functionTypes} label="函数类型" />
        <ListBox items={functionNames} label="函数名" />
        <div className="flex min-w-0 flex-1 overflow-hidden border border-[#999] bg-white">
          <ul className="flex-1 leading-[15px]">
            <li className="flex h-4 items-center pl-[21px]">
              <svg className="mr-1.5 h-3 w-[13px]" viewBox="0 0 13 12">
                <path d="M.500.500h12v11H.500z" fill="#fff" stroke="#0a1a9c" />
                <path d="M3 4h3v4H3zM8 4h3M8 6h3M8 8h3" fill="#e8e000" stroke="#0a1a9c" />
              </svg>
              数据项
            </li>
            <li className="flex h-4 items-center pl-1">
              <span className="w-[17px]">
                <Triangle isOpen />
              </span>
              <svg className="mr-1.5 h-3 w-[13px]" viewBox="0 0 13 12">
                <path d="M4 3l5 6M9 3l-5 6" stroke="#222" strokeWidth="1.500" />
                <path d="M2 3h3M4 1v3M8 3h3M9 1v3M2 9h3M4 8v3M8 9h3" stroke="#222" strokeWidth="1.500" />
                <circle cx="10" cy="9" fill="#9cb828" r="1.500" />
              </svg>
              <Song>变量 - </Song>
              <span className="text-[#dc009c]">
                <Song>[</Song>
              </span>
              <Song>16</Song>
              <span className="text-[#6400c8]">
                <Song>]</Song>
              </span>
            </li>
            {variables.map((variable) => (
              <li key={variable} className="flex h-[15px] items-center pl-10">
                <Song>{variable}</Song>
              </li>
            ))}
            <li className="flex h-4 items-center pl-1">
              <span className="w-[17px]">
                <Triangle isOpen />
              </span>
              <svg className="mr-1 h-3.5 w-[15px]" viewBox="0 0 15 14">
                <path d="M3.500.500h4v3h-4zM.500 4.500h4v4h-4z" fill="#fff" stroke="#3c3c96" />
                <path d="M8 5.500H6.500v8H8M13 5.500h1.500v8H13" fill="none" stroke="#333" />
                <path d="M9 8c0-2 3-2 3 0s-1.500 1-1.500 3" fill="none" stroke="#3c3c96" />
              </svg>
              <Song>数据集参数 - </Song>
              <span className="text-[#dc009c]">
                <Song>[</Song>
              </span>
              <Song>2</Song>
              <span className="text-[#6400c8]">
                <Song>]</Song>
              </span>
            </li>
            <li className="flex h-[15px] items-center pl-10">
              <Song>$xm</Song>
            </li>
          </ul>
          <div className="mt-px mr-px h-[260px] w-2 rounded-full bg-[#e4e4e4]" />
        </div>
        <div
          className="w-[172px] border border-[#d8d9dc] bg-white pt-1 pl-1 font-['Noto_Sans_CJK_SC',sans-serif] leading-[15px]"
          lang="zh-CN">
          {description.map((line) => (
            <p key={line} className="h-[15px] whitespace-nowrap">
              <Song>{line}</Song>
            </p>
          ))}
        </div>
      </div>
      <div className="mt-1 flex justify-end gap-2.5 pr-3.5">
        <button className="h-5 w-11 border border-[#d8d9dc] bg-white" type="button">
          确定
        </button>
        <button className="h-5 w-11 border border-[#d8d9dc] bg-white" type="button">
          取消
        </button>
      </div>
    </div>
  );
}

function Workspace() {
  return (
    <main className="relative flex min-w-0 flex-1 flex-col bg-[#f4f4f6]">
      <EditorToolbar />
      <FormatBar />
      <ParameterPane />
      <div className="h-2.5 shrink-0 bg-[#d8d8da]" />
      <div className="flex min-h-0 flex-1">
        <Grid />
        <div className="flex w-[17px] shrink-0 flex-col bg-[#e8e8e8] pl-px">
          <IconButton className="h-4 w-4 bg-white" label="向上">
            <ChevronUp className="h-3.5 w-3.5 text-gray-600" />
          </IconButton>
          <div className="h-[519px] bg-[#e0e0e0]" />
          <span className="flex-1" />
          <IconButton className="h-4 w-4 bg-white" label="向下">
            <ChevronDown className="h-3.5 w-3.5 text-gray-600" />
          </IconButton>
        </div>
      </div>
      <div className="flex h-[17px] shrink-0">
        <IconButton className="w-4 bg-white" label="向左">
          <ChevronLeft className="h-3.5 w-3.5 text-gray-600" />
        </IconButton>
        <div className="ml-[70px] w-[400px] bg-[#e0e0e0]" />
        <span className="flex-1" />
        <IconButton className="w-4 bg-white" label="向右">
          <ChevronRight className="h-3.5 w-3.5 text-gray-600" />
        </IconButton>
      </div>
      <SheetBar />
      <div className="absolute inset-0 overflow-hidden">
        <FormulaDialog />
        <div className="pointer-events-none absolute top-[392px] left-[275px] h-[166px] w-[600px] rounded-[3px] border-[3px] border-[#ff1e14]" />
      </div>
    </main>
  );
}

function PropertyStrip() {
  return (
    <div className="flex w-10 shrink-0 flex-col items-center bg-[#e8e8e8] text-gray-600">
      <IconButton className="h-[27px] w-8" label="收起">
        <svg className="h-2.5 w-2" viewBox="0 0 8 10">
          <path d="M1 0l6 5-6 5z" fill="#9c9c9c" />
        </svg>
      </IconButton>
      <IconButton className="h-8 w-8" label="单元格元素">
        <svg className="h-4 w-4" fill="none" stroke="currentColor" strokeWidth="1.500" viewBox="0 0 16 16">
          <path d="M1 16V1h15M11 1v9M1 10.500h15M6 11v5M11 11v5M11 6h5" />
        </svg>
      </IconButton>
      <IconButton className="my-0.5 h-7 w-8 bg-[#f4f4f6]" label="单元格属性">
        <svg className="h-4 w-4" viewBox="0 0 16 16">
          <path d="M0 0h4v4H0zM5.500 0h4v4h-4zM11 0h5v4h-5zM0 5.500h4v4H0zM0 11h5v5H0z" fill="#3c95f5" />
          <circle cx="11" cy="11" fill="#3c95f5" r="5" />
          <path d="M11 7v1.500M11 9.500v4.500" stroke="#fff" strokeWidth="1.800" />
        </svg>
      </IconButton>
      <IconButton className="h-8 w-8" label="悬浮元素">
        <svg className="h-4 w-4" fill="none" stroke="currentColor" strokeWidth="1.500" viewBox="0 0 16 16">
          <path d="M2.500 0v16M13.500 0v16M0 2.500h16M0 13.500h16" />
        </svg>
      </IconButton>
      <IconButton className="h-8 w-8" label="控件设置">
        <svg className="h-3 w-4" viewBox="0 0 16 12">
          <path d="M.750.750h14.500v10.500H.750z" fill="none" stroke="currentColor" strokeWidth="1.500" />
          <path d="M8 4h5l-2.500 4z" fill="currentColor" />
        </svg>
      </IconButton>
      <IconButton className="h-8 w-8" label="条件属性">
        <svg className="h-3 w-[18px]" fill="none" stroke="currentColor" strokeWidth="1.500" viewBox="0 0 18 12">
          <path d="M5.500.750h11.500v3H5.500zM5.500 8h9v3.250h-9zM3.500 2H1v7.500h2.500" />
        </svg>
      </IconButton>
      <IconButton className="h-8 w-8" label="超级链接">
        <Link className="h-[18px] w-[18px] -scale-x-100" strokeWidth={2.25} />
      </IconButton>
    </div>
  );
}

function SogouMark({ className }: { className: string }) {
  return (
    <svg className={className} viewBox="0 0 30 30">
      <path d="M3 4l21-4q2 0 3 2l3 22q0 2-2 3L8 30q-3 0-4-3L1 8q0-3 2-4z" fill="#f4511e" />
      <path d="M23 7C15 5 8 7 8 11c0 5 14 3 14 8 0 4-8 5-15 3" fill="none" stroke="#fff" strokeWidth="4" />
    </svg>
  );
}

function KeyboardIcon() {
  return (
    <svg className="h-3 w-4" viewBox="0 0 16 12">
      <rect fill="#fff" height="10.500" rx="1" stroke="#0a6fdc" strokeWidth="1.500" width="14.500" x=".750" y=".750" />
      <path d="M3 3.500h11M3 6h11" stroke="#0a6fdc" strokeDasharray="2 1" strokeWidth="1.500" />
      <path d="M5 9h6" stroke="#0a6fdc" strokeWidth="1.500" />
    </svg>
  );
}

function PropertyPanel() {
  return (
    <aside className="relative flex w-[246px] shrink-0 flex-col bg-[#f4f4f6]">
      <div className="flex h-[27px] shrink-0 items-center justify-between border-b-2 border-[#e0e0e3] pr-1.5 pl-2.5">
        <span>单元格属性</span>
        <svg className="h-3 w-3" fill="none" stroke="#3c95f5" strokeWidth="2" viewBox="0 0 12 12">
          <path d="M11.500.500L2 10" />
          <path d="M0 5v7h7z" fill="#3c95f5" stroke="none" />
        </svg>
      </div>
      <div className="grid h-[25px] shrink-0 grid-cols-4 pl-px" role="tablist">
        {["扩展", "样式", "形态", "其他"].map((tab) => (
          <button
            key={tab}
            aria-selected={tab === "形态"}
            className={tab === "形态" ? "bg-[#f4f4f6]" : "bg-[#d8d9dc]"}
            role="tab"
            type="button">
            {tab}
          </button>
        ))}
      </div>
      <div className="flex flex-col pt-2.5 pr-3 pl-2.5">
        <SelectBox className="w-full" label="形态" options={["数据字典"]} />
        <label className="mt-1.5 flex items-center justify-between">
          类型设置
          <SelectBox className="w-[156px] pl-1.5" label="类型设置" options={["公式"]} />
        </label>
        <label className="mt-2.5 flex items-center">
          <span className="w-[57px]">实际值</span>
          <Fx />
          <input
            className="ml-auto h-5 w-36 border border-[#d8d9dc] bg-white px-1 font-['Liberation_Sans',sans-serif] outline-none"
            defaultValue="=$$$"
          />
        </label>
        <label className="mt-2.5 flex items-center">
          <span className="w-[57px]">显示值</span>
          <Fx />
          <input
            className="ml-auto h-5 w-36 border border-[#3c8ae8] bg-white px-0.5 font-['Liberation_Sans',sans-serif] outline-none"
            defaultValue={'), value("ds3", 2, 1, item))'}
          />
        </label>
        <div className="mt-4 leading-[15px] text-[#999]">
          {hint.map((line) => (
            <p key={line} className="h-[15px] whitespace-nowrap">
              <Song>{line}</Song>
            </p>
          ))}
        </div>
      </div>
      <div className="absolute right-[5px] bottom-[63px] flex items-end">
        <SogouMark className="z-10 -mr-2 h-[30px] w-[31px]" />
        <div className="flex h-[26px] w-[130px] items-center justify-between rounded-sm border border-[#b4cdec] bg-white pr-1 pl-3.5 text-[#0a6fdc]">
          <b className="text-sm">中</b>
          <svg className="h-3 w-3" viewBox="0 0 12 12">
            <circle cx="3" cy="3" fill="none" r="1.800" stroke="#0a6fdc" strokeWidth="1.500" />
            <path d="M8 6h3c1 3-1 5-3 6l1-3H8z" fill="#0a6fdc" />
          </svg>
          <Mic className="h-4 w-4 fill-[#0a6fdc]" />
          <KeyboardIcon />
          <svg className="h-3.5 w-3.5" viewBox="0 0 14 14">
            <rect fill="#6a5cf0" height="6" rx="1.500" width="6" />
            <circle cx="11" cy="3" fill="none" r="2.200" stroke="#6a5cf0" strokeWidth="1.500" />
            <rect fill="#6a5cf0" height="6" rx="1.500" width="6" y="8" />
            <rect fill="#6a5cf0" height="6" rx="1.500" width="6" x="8" y="8" />
          </svg>
        </div>
      </div>
    </aside>
  );
}

function WechatIcon({ className }: { className: string }) {
  return (
    <svg className={className} viewBox="0 0 24 24">
      <ellipse cx="9" cy="9" fill="#1fc35d" rx="9" ry="8" />
      <path d="M3 14l-1 5 5-3z" fill="#1fc35d" />
      <ellipse cx="16.500" cy="15" fill="#e4e8e6" rx="7.500" ry="6.500" />
      <path d="M6 7v1.500M12 7v1.500M14 13v1.500M19 13v1.500" stroke="#234" strokeWidth="1.500" />
    </svg>
  );
}

const taskbarApps: { name: string; icon: ReactNode; isActive?: boolean }[] = [
  {
    name: "开始",
    icon: (
      <svg className="h-4 w-4" viewBox="0 0 16 16">
        <path d="M0 2l7-1v6.500H0zM8 1l8-1v7.500H8zM0 8.500h7V15l-7-1zM8 8.500h8V16l-8-1z" fill="#fff" />
      </svg>
    ),
  },
  {
    name: "搜索",
    icon: <Search className="h-[18px] w-[18px] -scale-x-100 text-white" strokeWidth={1.75} />,
  },
  {
    name: "记事本",
    icon: (
      <svg className="h-6 w-6" viewBox="0 0 24 24">
        <path d="M8 1h13l-3 21H2z" fill="#8cc8d8" />
        <path d="M8 1h13l-1 3H7z" fill="#dceef2" />
        <path d="M18 5l3-3-2 20-4 1z" fill="#3c8298" />
      </svg>
    ),
  },
  {
    name: "远程桌面",
    icon: (
      <svg className="h-6 w-6" viewBox="0 0 24 24">
        <path d="M3 2l17-2v14L3 16z" fill="#c6d4e8" />
        <path d="M5 3l13-1v11L5 14z" fill="#1428c8" />
        <path d="M8 16h6l2 5H6z" fill="#c6d4e8" />
        <circle cx="18" cy="18" fill="#dceade" r="5" />
        <path d="M15 18l3-2v4l3-2" fill="none" stroke="#2c9c3c" strokeWidth="1.500" />
      </svg>
    ),
  },
  {
    name: "编辑器",
    icon: (
      <svg className="h-6 w-6" viewBox="0 0 24 24">
        <path d="M3 1h16v22H3z" fill="#f4f4ec" />
        <path d="M3 17h16v6H3z" fill="#78c828" />
        <path d="M6 9v6M9 12h6" stroke="#333" strokeWidth="2" />
        <path d="M5 3h12" stroke="#777" strokeDasharray="1 1" strokeWidth="2" />
        <path d="M21 0l3 2-9 15-3 1 1-3z" fill="#e8a818" />
      </svg>
    ),
  },
  {
    name: "Excel",
    icon: (
      <svg className="h-6 w-6" viewBox="0 0 24 24">
        <path d="M12 4h11v17H12z" fill="#fff" stroke="#1e7145" />
        <path d="M13 7.500h9M13 11h9M13 14.500h9M13 18h9M18 4v17" stroke="#1e7145" strokeWidth="1.500" />
        <path d="M1 3l13-2v22L1 21z" fill="#1e7145" />
        <path d="M4 8l6 9M10 8l-6 9" stroke="#fff" strokeWidth="2" />
      </svg>
    ),
  },
  {
    name: "浏览器",
    icon: (
      <svg className="h-6 w-6" fill="none" viewBox="0 0 24 24">
        <circle cx="11" cy="11" r="8" stroke="#1ba0f0" strokeWidth="4" />
        <path d="M13 13l4 8 4-6z" fill="#f5c818" />
        <path d="M17 12l5 8" stroke="#22c8a0" strokeWidth="3" />
      </svg>
    ),
  },
  {
    name: "资源管理器",
    icon: (
      <svg className="h-6 w-6" viewBox="0 0 24 24">
        <path d="M1 3h8l2 2h12v17H1z" fill="#f0b83c" />
        <path d="M1 8h22v14H1z" fill="#fcdc78" />
        <path d="M6 14h12v8h-3v-4H9v4H6z" fill="#3c9be0" />
      </svg>
    ),
  },
  {
    name: "画图",
    icon: (
      <svg className="h-6 w-6" viewBox="0 0 24 24">
        <ellipse cx="11" cy="14" fill="#dce8f2" rx="10" ry="9" />
        <circle cx="6" cy="13" fill="#e03c28" r="2" />
        <circle cx="10" cy="9" fill="#28a03c" r="2" />
        <circle cx="15" cy="10" fill="#f0c018" r="2" />
        <circle cx="8" cy="18" fill="#2858d8" r="2" />
        <path d="M20 0l3 3-8 12-3-1z" fill="#c87838" />
      </svg>
    ),
  },
  { name: "FineReport", icon: <FrMark className="h-6 w-6" />, isActive: true },
  {
    name: "Chrome",
    icon: (
      <svg className="h-6 w-6" viewBox="0 0 24 24">
        <circle cx="12" cy="12" fill="#e8b818" r="11" />
        <path d="M12 12L2.500 6.500a11 11 0 0 1 19.500 1z" fill="#e03c2c" />
        <path d="M12 12L2.500 6.500A11 11 0 0 0 12 23z" fill="#2ca04c" />
        <circle cx="12" cy="12" fill="#fff" r="6" />
        <circle cx="12" cy="12" fill="#3c78e8" r="4.500" />
      </svg>
    ),
  },
  { name: "微信", icon: <WechatIcon className="h-6 w-6" /> },
];

function Taskbar() {
  return (
    <footer className="flex h-[27px] shrink-0 items-start overflow-hidden bg-[#212121] text-white">
      <div className="-ml-1 flex flex-1">
        {taskbarApps.map((app) => (
          <button
            key={app.name}
            aria-label={app.name}
            className={`flex h-10 w-[49px] items-center justify-center ${app.isActive ? "bg-[#484848]" : ""}`}
            type="button">
            {app.icon}
          </button>
        ))}
      </div>
      <div className="flex h-10 items-center gap-[9px] pr-[22px]">
        <ChevronUp className="h-4 w-4" strokeWidth={2} />
        <svg className="h-3 w-4" fill="none" stroke="#fff" viewBox="0 0 16 12">
          <path d="M5.500 3.500h9v7h-9zM1.500 0v3M4.500 0v3M.500 3.500h5v2L3 7v3h2" />
          <path d="M7 5h6v4H7z" fill="#fff" />
        </svg>
        <Volume2 className="h-4 w-4" strokeWidth={1.75} />
        <svg className="h-4 w-4" fill="none" stroke="#fff" viewBox="0 0 16 16">
          <path d="M3 16A13 13 0 0 1 15 3M6 16A10 10 0 0 1 15 7M9 16a7 7 0 0 1 6-5" strokeWidth="1.300" />
          <circle cx="14" cy="15" fill="#fff" r="1" />
        </svg>
        <span className="flex h-4 w-4 items-center justify-center bg-white">
          <svg className="h-3.5 w-3.5" fill="none" viewBox="0 0 24 24">
            <circle cx="11" cy="11" r="8" stroke="#1b80e0" strokeWidth="4" />
            <path d="M15 14l7 7" stroke="#f5b818" strokeWidth="4" />
          </svg>
        </span>
        <WechatIcon className="h-4 w-4" />
        <span className="text-sm">中</span>
        <SogouMark className="ml-1.5 h-4 w-4" />
      </div>
      <time className="w-[62px] pt-[3px] text-center font-['Noto_Sans',sans-serif] leading-4 whitespace-nowrap">
        10:56
        <br />
        2022/9/22
      </time>
      <svg className="mt-3 mr-[25px] ml-[17px] h-4 w-4" viewBox="0 0 16 16">
        <path d="M0 0h16v12h-5v4l-4-4H0z" fill="#fff" />
        <path d="M3 4h10M3 7h10" stroke="#212121" />
      </svg>
    </footer>
  );
}

export default function App() {
  return (
    <div className="flex h-screen flex-col overflow-hidden bg-white font-['Liberation_Sans','Noto_Sans_CJK_SC',sans-serif] text-xs text-black">
      <TitleBar />
      <MenuBar />
      <div className="flex min-h-0 flex-1">
        <Sidebar />
        <div className="flex w-2.5 shrink-0 flex-col items-center justify-between bg-[#e8e8e8] pt-2">
          <span className="rotate-180">
            <Triangle />
          </span>
          <span className="h-1.5 w-[3px] border-x border-gray-400" />
          <span />
        </div>
        <Workspace />
        <PropertyStrip />
        <PropertyPanel />
      </div>
      <Taskbar />
    </div>
  );
}
